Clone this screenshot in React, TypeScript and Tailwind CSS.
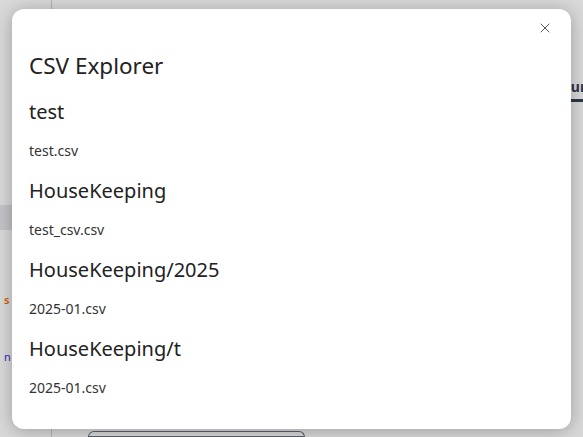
import { X } from 'lucide-react';

const FOLDERS = [
  { name: 'test', files: ['test.csv'] },
  { name: 'HouseKeeping', files: ['test_csv.csv'] },
  { name: 'HouseKeeping/2025', files: ['2025-01.csv'] },
  { name: 'HouseKeeping/t', files: ['2025-01.csv'] },
];

export default function App() {
  return (
    <div className="relative w-[583px] h-[437px] overflow-hidden bg-white" style={{ fontFamily: '"Noto Sans", "Open Sans", sans-serif' }}>
      {/* page behind the dialog */}
      <div className="flex h-full">
        <div className="w-[52px] shrink-0 border-r border-gray-300 flex flex-col pt-[205px]">
          <div className="h-[25px] w-full bg-gray-200" />
          <div className="mt-[62px] pl-1 text-[11px] text-orange-500 font-semibold">s</div>
          <div className="mt-[40px] pl-1 text-[11px] text-indigo-700">n</div>
        </div>
        <div className="flex-1 flex flex-col">
          <div className="flex justify-end pt-[76px]">
            <div className="flex flex-col items-end">
              <span className="text-[14px] font-bold text-gray-700 -mr-[6px]">un</span>
              <div className="w-[20px] h-[3px] bg-gray-700 mt-[2px]" />
            </div>
          </div>
          <div className="flex-1" />
          <div className="ml-[36px] w-[217px] h-[6px] border border-gray-500 rounded-t-md" />
        </div>
      </div>

      {/* overlay */}
      <div className="absolute inset-0 bg-black/15" />

      {/* dialog */}
      <div className="absolute left-[12px] top-[9px] w-[559px] h-[420px] bg-white rounded-xl shadow-[0_2px_18px_rgba(0,0,0,0.28)] flex flex-col pl-[17px] pr-4">
        <button className="absolute right-[18px] top-[11px] text-gray-600">
          <X size={16} strokeWidth={1.5} />
        </button>
        <h2 className="mt-[42px] text-[22.5px] leading-[30px] text-[#222]">CSV Explorer</h2>
        <div className="flex flex-col mt-[17px] gap-[16px]">
          {FOLDERS.map((f, i) => (
            <div key={i} className="flex flex-col gap-[15px]">
              <h3 className="text-[20px] leading-[28px] text-[#222]">{f.name}</h3>
              {f.files.map(file => (
                <p key={file} className="text-[14px] leading-[20px] text-[#333]">{file}</p>
              ))}
            </div>
          ))}
        </div>
      </div>
    </div>
  );
}
